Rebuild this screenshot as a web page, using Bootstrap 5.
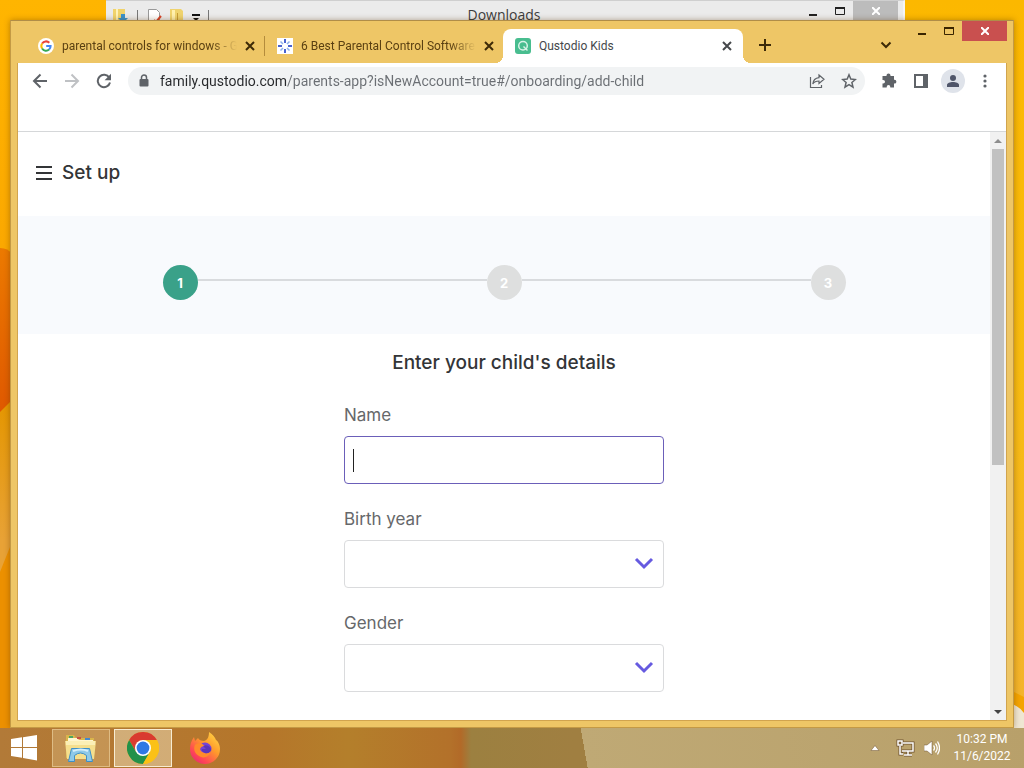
<!DOCTYPE html>
<html lang="en">
<head>
<meta charset="utf-8">
<meta name="viewport" content="width=device-width, initial-scale=1">
<title>Qustodio Kids</title>
<link href="https://cdn.jsdelivr.net/npm/bootstrap@5.3.0/dist/css/bootstrap.min.css" rel="stylesheet">
<style>
  :root { --ui: Roboto, "Open Sans", sans-serif; --caption: "Open Sans", sans-serif; --app: Inter, "Open Sans", sans-serif; }
  body { font-family: var(--ui); font-size: 12px; line-height: 16px; color: #3c3c3c; }
  button { font: inherit; color: inherit; }
  svg { display: block; flex: none; }
  .plain { border: 0; background: none; padding: 0; display: flex; align-items: center; justify-content: center; flex: none; }
  .wallpaper { position: absolute; inset: 0; width: 100%; height: 100%; }

  /* windows on the desktop */
  .downloads { position: absolute; left: 106px; right: 119px; top: 0; height: 40px; background: #ebebeb; border-top: 1px solid #cfcfcf; border-right: 2px solid #f5f5f5; }
  .downloads .strip { height: 19px; padding: 0 5px 0 7px; }
  .downloads .caption { font-family: var(--caption); font-size: 14px; line-height: 28px; }
  .downloads .vr-line { width: 1px; height: 12px; background: #777; }
  .downloads .shut { width: 45px; height: 19px; background: #bcbcbc; color: #fff; }
  .browser { position: absolute; left: 10px; right: 10px; top: 20px; bottom: 0; background: #eec666; border: 1px solid #c49a45; border-top-color: #b08d48; box-shadow: 0 0 6px rgba(90,50,0,.4); padding: 0 6px 6px; }
  .caption-btn { width: 27px; height: 20px; color: #3a2500; }
  .caption-close { width: 45px; background: #c9504f; color: #fff; }

  /* tab strip */
  .tabs { height: 42px; padding-left: 9px; }
  .tab { height: 34px; width: 238px; padding: 0 9px 0 12px; color: #5a4012; position: relative; }
  .tab-title { flex: 1 1 0; min-width: 0; overflow: hidden; white-space: nowrap; text-align: left; color: inherit; text-decoration: none; }
  .tab-title.fade-end { -webkit-mask-image: linear-gradient(90deg,#000 85%,transparent); mask-image: linear-gradient(90deg,#000 85%,transparent); }
  .tab-split { width: 1px; height: 20px; background: #b48c3c; }
  .tab.current { background: #fff; color: #45484b; border-radius: 8px 8px 0 0; width: 240px; padding-right: 11px; }
  .tab.current::before, .tab.current::after { content: ""; position: absolute; bottom: 0; width: 8px; height: 8px; }
  .tab.current::before { left: -8px; background: radial-gradient(circle at 0 0, transparent 8px, #fff 8px); }
  .tab.current::after { right: -8px; background: radial-gradient(circle at 100% 0, transparent 8px, #fff 8px); }

  /* toolbar */
  .viewport { background: #fff; border: 1px solid #d1a44e; border-top: 0; }
  .toolbar { height: 36px; padding: 0 13px 0 14px; color: #5f6368; }
  .address { height: 28px; border-radius: 14px; background: #f1f3f4; padding: 0 8px 0 11px; }
  .address .lock { margin-right: 11px; }
  .address input { border: 0; outline: 0; padding: 0; font-size: 14px; line-height: 20px; flex: 1 1 0; min-width: 0; color: transparent; background: linear-gradient(90deg,#26282b 127px,#6a6e73 127px); -webkit-background-clip: text; background-clip: text; }
  .avatar { width: 24px; height: 24px; border-radius: 50%; background: #dfe3ea; margin: 0 12px; }
  .bookmarks { height: 33px; border-bottom: 1px solid #d5d7d9; }

  /* page */
  .page { font-family: var(--app); }
  .page-head { height: 84px; padding: 0 18px 2px; gap: 10px; }
  .page-head h1 { font-size: 19px; line-height: 24px; font-weight: 500; margin: 0; color: #333537; }
  .steps-band { background: #f8fafd; padding: 49px 16px 34px; }
  .steps { max-width: 683px; }
  .step { width: 35px; height: 35px; border-radius: 50%; background: #dedfdf; color: #fff; font-size: 13px; font-weight: 700; }
  .step.active { background: #3aa189; }
  .step-line { height: 2px; background: #d9dbde; margin-bottom: 6px; }
  .child-form { max-width: 320px; }
  .child-form h2 { font-size: 19px; line-height: 24px; font-weight: 500; color: #333537; margin: 17px 0 28px; white-space: nowrap; }
  .child-form label { display: block; font-size: 17px; line-height: 24px; color: #66686a; margin-bottom: 9px; }
  .field { margin-bottom: 23px; position: relative; }
  .child-form .form-control, .child-form .form-select { height: 48px; border: 1px solid #dadbdd; border-radius: 4px; }
  .child-form .form-control { border-color: #6b5fb9; caret-color: transparent; padding: 0 8px; }
  .child-form .form-select { background-image: url("data:image/svg+xml,%3Csvg xmlns='http://www.w3.org/2000/svg' viewBox='0 0 20 20'%3E%3Cpath d='M2 5l8 8 8-8' fill='none' stroke='%23665ae0' stroke-width='3'/%3E%3C/svg%3E"); background-size: 20px 20px; background-position: right 9px center; }
  .caret::after { content: ""; position: absolute; left: 9px; bottom: 12px; width: 1px; height: 23px; background: #222; }
  .scroll { width: 16px; background: #f1f1f1; }
  .scroll .thumb { width: 12px; flex: 316 1 0; background: #c1c1c1; }
  .scroll .rest { flex: 238 1 0; }
  .scroll .plain { height: 17px; }

  /* taskbar */
  .taskbar { height: 40px; background: linear-gradient(90deg,#b27a38 0,#b5762a 26%,#b47f2b 34%,#b3712a 44%,#b26a28 45%,#9c8040 46%,#a07f41 56%,transparent 56%), linear-gradient(80deg,#a07f41 0 57%,#bfa975 57%,#b8a06a 100%); color: #fff; }
  .start { width: 52px; height: 38px; padding-right: 4px; }
  .task { width: 58px; height: 38px; margin-right: 4px; }
  .task.open { background: rgba(240,220,170,.28); border: 1px solid rgba(240,215,165,.6); }
  .task.front { background: rgba(240,225,190,.5); border: 1px solid #f7ecd2; }
  .clock { font-size: 12px; line-height: 17px; width: 64px; }
</style>
</head>
<body class="d-flex flex-column vh-100 overflow-hidden">

<main class="position-relative flex-grow-1 overflow-hidden">
  <svg class="wallpaper" viewBox="0 0 1024 728" preserveAspectRatio="none" aria-hidden="true">
    <defs>
      <linearGradient id="sun" x2="0" y2="1"><stop stop-color="#ffb500"/><stop offset=".34" stop-color="#fba800"/></linearGradient>
      <linearGradient id="ember" x2="0" y2="1"><stop stop-color="#ec7a00"/><stop offset="1" stop-color="#df5800"/></linearGradient>
      <linearGradient id="sand" x2="0" y2="1"><stop stop-color="#e49600"/><stop offset=".8" stop-color="#e8a236"/></linearGradient>
      <linearGradient id="east" x2="0" y2="1"><stop stop-color="#fcb800"/><stop offset=".5" stop-color="#f8bc10"/><stop offset="1" stop-color="#f3b32e"/></linearGradient>
    </defs>
    <path fill="url(#sun)" d="M0 0h512v728H0z"/>
    <path fill="url(#east)" d="M512 0h512v728H512z"/>
    <path fill="url(#ember)" d="M0 248q8 0 12 6v150L0 414z"/>
    <path fill="url(#sand)" d="M0 412l12-12v145L0 575z"/>
    <path fill="#ec9000" d="M0 572l12-30v186H0z"/>
    <path fill="#f4a400" d="M1000 685l24 12v31h-24z"/>
    <path fill="#efe6d2" d="M1000 700q18 4 24 13v15h-24z"/>
  </svg>

  <section class="downloads" aria-label="Downloads folder">
    <div class="strip d-flex align-items-start">
      <div class="d-flex align-items-center gap-2 pt-2">
        <svg width="16" height="14" viewBox="0 0 16 14"><path fill="#f0d36c" d="M0 0h12v14H0z"/><path fill="#fff3b8" d="M3 0h2v14H3z"/><path fill="#3b93cc" d="M8 5h4v4h3l-5 5-5-5h3z"/></svg>
        <span class="vr-line"></span>
        <svg width="16" height="14" viewBox="0 0 16 14"><path fill="#fff" stroke="#999" d="M2.500.5h8l3 3V14h-11z"/><path d="M8 11l2 2 5-6" fill="none" stroke="#d9452b" stroke-width="2"/></svg>
        <svg width="14" height="14" viewBox="0 0 14 14"><path fill="#efd36e" d="M0 0h11l2 2v12H0z"/><path fill="#fff0ad" d="M2 1h3v13H2z"/><path fill="#c69c34" d="M7 4h1v10H7z"/></svg>
        <svg width="8" height="10" viewBox="0 0 8 10"><path fill="#111" d="M0 3h8v2H0zM1 7h6L4 10z"/></svg>
        <span class="vr-line"></span>
      </div>
      <div class="caption flex-grow-1 text-center">Downloads</div>
      <button class="plain caption-btn" aria-label="Minimize"><svg width="8" height="12"><path fill="#222" d="M0 9h8v2H0z"/></svg></button>
      <button class="plain caption-btn" aria-label="Maximize"><svg width="10" height="8"><path fill="none" stroke="#222" d="M.5 1h9v6.500h-9z"/><path fill="#222" d="M0 0h10v2H0z"/></svg></button>
      <button class="plain shut" aria-label="Close"><svg width="8" height="8"><path stroke="#fff" stroke-width="2" d="M0 0l8 8M8 0L0 8"/></svg></button>
    </div>
  </section>

  <section class="browser d-flex flex-column" aria-label="Browser">
    <header class="d-flex align-items-start">
      <nav class="tabs d-flex align-items-end flex-grow-1" aria-label="Tabs">
        <div class="tab d-flex align-items-center">
          <svg width="16" height="16" viewBox="0 0 16 16"><circle cx="8" cy="8" r="8" fill="#fff"/><g fill="none" stroke-width="2"><path stroke="#ea4335" d="M4.100 5.500A4.600 4.600 0 0 1 11.300 4.800"/><path stroke="#fbbc05" d="M4.100 5.500a4.600 4.600 0 0 0 0 5"/><path stroke="#34a853" d="M4.100 10.500a4.600 4.600 0 0 0 7 1"/><path stroke="#4285f4" d="M11.100 11.500A4.600 4.600 0 0 0 12.600 8H8.200"/></g></svg>
          <a href="#" class="tab-title fade-end ms-2 me-2">parental controls for windows - G</a>
          <button class="plain" aria-label="Close tab"><svg width="10" height="10"><path stroke="#3d2a08" stroke-width="2" d="M1 1l8 8M9 1L1 9"/></svg></button>
        </div>
        <span class="tab-split align-self-center mt-2"></span>
        <div class="tab d-flex align-items-center">
          <svg width="16" height="16" viewBox="0 0 16 16"><path fill="#fff" d="M0 0h16v16H0z"/><g stroke="#4a63d0" stroke-width="2"><path d="M8 1v4M8 11v4M1 8h4M11 8h4"/><path stroke="#8fb2ea" stroke-width="1.500" d="M3.500 3.500L6 6M12.500 3.500L10 6M3.500 12.500L6 10M12.500 12.500L10 10"/></g></svg>
          <a href="#" class="tab-title fade-end ms-2 me-2">6 Best Parental Control Software</a>
          <button class="plain" aria-label="Close tab"><svg width="10" height="10"><path stroke="#3d2a08" stroke-width="2" d="M1 1l8 8M9 1L1 9"/></svg></button>
        </div>
        <div class="tab current d-flex align-items-center">
          <svg width="16" height="16" viewBox="0 0 16 16"><rect width="16" height="16" rx="3" fill="#48bd8f"/><circle cx="8" cy="7.700" r="4.300" fill="none" stroke="#d8f3e7" stroke-width="1.500"/><path stroke="#d8f3e7" stroke-width="1.500" d="M8.500 8.500l4 4"/></svg>
          <a href="#" class="tab-title ms-2">Qustodio Kids</a>
          <button class="plain" aria-label="Close tab"><svg width="10" height="10"><path stroke="#45484b" stroke-width="2" d="M1 1l8 8M9 1L1 9"/></svg></button>
        </div>
        <button class="plain ms-3 mb-2 pb-1" aria-label="New tab"><svg width="12" height="12"><path stroke="#3d2a08" stroke-width="2" d="M6 0v12M0 6h12"/></svg></button>
        <button class="plain ms-auto me-3 mb-2 pb-1" aria-label="Search tabs"><svg width="12" height="12"><path fill="none" stroke="#3d2a08" stroke-width="2" d="M1.500 3.500L6 8l4.500-4.500"/></svg></button>
      </nav>
      <button class="plain caption-btn" aria-label="Minimize"><svg width="8" height="12"><path fill="currentColor" d="M0 8h8v2H0z"/></svg></button>
      <button class="plain caption-btn" aria-label="Maximize"><svg width="10" height="8"><path fill="none" stroke="currentColor" d="M.5 1h9v6.500h-9z"/><path fill="currentColor" d="M0 0h10v2H0z"/></svg></button>
      <button class="plain caption-btn caption-close" aria-label="Close"><svg width="8" height="8"><path stroke="#fff" stroke-width="2" d="M0 0l8 8M8 0L0 8"/></svg></button>
    </header>

    <div class="viewport d-flex flex-column flex-grow-1 overflow-hidden">
      <div class="toolbar d-flex align-items-center flex-shrink-0">
        <button class="plain" aria-label="Back"><svg width="16" height="16" viewBox="0 0 16 16"><path fill="none" stroke="currentColor" stroke-width="2" d="M15 8H2M8.500 1.500L2 8l6.500 6.500"/></svg></button>
        <button class="plain ms-3" aria-label="Forward"><svg width="16" height="16" viewBox="0 0 16 16"><path fill="none" stroke="#bfc1c4" stroke-width="2" d="M1 8h13M7.500 1.500L14 8l-6.500 6.500"/></svg></button>
        <button class="plain ms-3 me-3" aria-label="Reload"><svg width="16" height="16" viewBox="0 0 16 16"><path fill="none" stroke="currentColor" stroke-width="2" d="M13.300 4.800A6.200 6.200 0 1 0 14 9.500"/><path fill="currentColor" d="M15 .8v6.400H8.600z"/></svg></button>
        <div class="address d-flex align-items-center flex-grow-1">
          <svg class="lock" width="10" height="14" viewBox="0 0 10 14"><rect x=".5" y="5" width="9" height="7.500" rx="1" fill="currentColor"/><path fill="none" stroke="currentColor" stroke-width="1.500" d="M2.500 5.500V3.500a2.500 2.500 0 0 1 5 0v2"/></svg>
          <input type="text" aria-label="Address" value="family.qustodio.com/parents-app?isNewAccount=true#/onboarding/add-child">
          <button class="plain" aria-label="Share"><svg width="16" height="16" viewBox="0 0 16 16"><path fill="none" stroke="currentColor" stroke-width="1.200" d="M1.500 4v10.500h11V12M10 2l5 4.300-5 4.200V8C7 8 5 9 3.800 11 4.200 7 6.500 5 10 4.600z"/></svg></button>
          <button class="plain ms-3" aria-label="Bookmark"><svg width="16" height="16" viewBox="0 0 16 16"><path fill="none" stroke="currentColor" stroke-width="1.500" d="M8 1.800l1.800 4.300 4.600.4-3.500 3 1.100 4.600L8 11.700l-4 2.400 1.100-4.600-3.500-3 4.600-.4z"/></svg></button>
        </div>
        <button class="plain ms-3" aria-label="Extensions"><svg width="16" height="16" viewBox="0 0 16 16"><path fill="currentColor" d="M2 3h3.500V2.500a2 2 0 0 1 4 0V3H13v3.800h.5a1.900 1.900 0 0 1 0 3.800H13v4H9.300v-.7a1.800 1.800 0 0 0-3.600 0v.7H1.500v-4h.7a1.800 1.800 0 0 0 0-3.600h-.7V3z"/></svg></button>
        <button class="plain ms-3" aria-label="Side panel"><svg width="16" height="16" viewBox="0 0 16 16"><path fill="currentColor" fill-rule="evenodd" d="M1 1h14v14H1zM3 3v10h7V3z"/></svg></button>
        <button class="plain avatar" aria-label="Profile"><svg width="14" height="14" viewBox="0 0 14 14"><circle cx="7" cy="4" r="3" fill="#50566a"/><path fill="#50566a" d="M1 13v-2c0-4 12-4 12 0v2z"/></svg></button>
        <button class="plain" aria-label="Menu"><svg width="16" height="16" viewBox="0 0 16 16" fill="currentColor"><circle cx="8" cy="3" r="1.600"/><circle cx="8" cy="8" r="1.600"/><circle cx="8" cy="13" r="1.600"/></svg></button>
      </div>
      <div class="bookmarks flex-shrink-0"></div>

      <div class="d-flex flex-grow-1 overflow-hidden">
        <div class="page flex-grow-1 overflow-hidden">
          <header class="page-head d-flex align-items-center">
            <button class="plain" aria-label="Open menu"><svg width="16" height="16"><path stroke="#333537" stroke-width="2" d="M0 2h16M0 8h16M0 14h16"/></svg></button>
            <h1>Set up</h1>
          </header>
          <div class="steps-band">
            <div class="steps d-flex align-items-center mx-auto">
              <span class="step active d-flex align-items-center justify-content-center">1</span>
              <span class="step-line flex-grow-1"></span>
              <span class="step d-flex align-items-center justify-content-center">2</span>
              <span class="step-line flex-grow-1"></span>
              <span class="step d-flex align-items-center justify-content-center">3</span>
            </div>
          </div>
          <form class="child-form mx-auto">
            <h2 class="text-center">Enter your child's details</h2>
            <div class="field caret">
              <label for="name">Name</label>
              <input id="name" class="form-control" type="text">
            </div>
            <div class="field">
              <label for="year">Birth year</label>
              <select id="year" class="form-select"><option></option></select>
            </div>
            <div class="field">
              <label for="gender">Gender</label>
              <select id="gender" class="form-select"><option></option></select>
            </div>
          </form>
        </div>
        <div class="scroll d-flex flex-column align-items-center flex-shrink-0">
          <button class="plain" aria-label="Scroll up"><svg width="8" height="4"><path fill="#8d8d8d" d="M0 4l4-4 4 4z"/></svg></button>
          <div class="thumb"></div>
          <div class="rest"></div>
          <button class="plain" aria-label="Scroll down"><svg width="8" height="4"><path fill="#444" d="M0 0l4 4 4-4z"/></svg></button>
        </div>
      </div>
    </div>
  </section>
</main>

<footer class="taskbar d-flex align-items-center flex-shrink-0">
  <button class="plain start" aria-label="Start"><svg width="28" height="28" viewBox="0 0 28 28" fill="#fff"><path d="M1 5l11-1.700V13H1zM13 3.200L27 1v12H13zM1 14h11v9.700L1 22zM13 14h14v12.500l-14-2.400z"/></svg></button>
  <button class="plain task open" aria-label="File Explorer"><svg width="34" height="32" viewBox="0 0 34 32"><path fill="#d9b54c" d="M2 3h8l2 3h18v20H2z"/><path fill="#fff6cf" d="M4 6h9l2 2h14v4H4z"/><path fill="#4aa564" d="M5 4h4v2H5z"/><path fill="#c94f42" d="M13 5h4v2h-4z"/><path fill="#4488cc" d="M21 6h5v2h-5z"/><path fill="#f5df8e" d="M1 9h31l-2 18H3z"/><path fill="#fbefb6" d="M2 9h29v4H2z"/><path fill="#8fc9e8" stroke="#3e8fc6" d="M7.500 16.500h18l3 13h-6v-6q-6-5-12 0v6h-6z"/><path stroke="#d5effb" fill="none" stroke-width="2" d="M9 19q8-3 15 0"/></svg></button>
  <button class="plain task front" aria-label="Chrome"><svg width="32" height="32" viewBox="0 0 32 32"><circle cx="16" cy="16" r="16" fill="#fbc116"/><path fill="#d93b30" d="M2.140 8A16 16 0 0 1 29.860 8H16L9.100 20z"/><path fill="#22914a" d="M2.140 8A16 16 0 0 0 16 32l6.900-12H9.100z"/><path fill="#fbc116" d="M29.860 8A16 16 0 0 1 16 32l6.900-12L22 10 16 8z"/><circle cx="16" cy="16" r="8" fill="#fff"/><circle cx="16" cy="16" r="6.400" fill="#2f78e4"/></svg></button>
  <button class="plain task" aria-label="Firefox"><svg width="32" height="32" viewBox="0 0 32 32"><defs><linearGradient id="fox" x1="1" x2=".2" y2="1"><stop stop-color="#ffe14a"/><stop offset=".45" stop-color="#ff9a2b"/><stop offset=".8" stop-color="#ff4755"/><stop offset="1" stop-color="#e82b70"/></linearGradient></defs><path fill="url(#fox)" d="M20 0c4 3 6 5 7 8 2 1 4 5 4 9a15 15 0 0 1-30 0c0-4 1-8 4-12l1 4 3-3c1 2 3 3 6 3 4-1 5-5 5-9z"/><circle cx="16" cy="17" r="6.500" fill="#7542d6"/><path fill="#ff8b2a" d="M6 13c3-3 7-2 10 1-3 0-4 1-5 3 1 4 7 6 11 2-1 6-8 8-12 5-4-2-6-7-4-11z"/><path fill="#5a36b9" d="M14 14c3-2 7 0 8 3 0 3-3 5-6 4-3-1-4-3-3-4h4z"/></svg></button>
  <div class="d-flex align-items-center ms-auto me-2 pe-1">
    <button class="plain" aria-label="Show hidden icons"><svg width="10" height="6"><path fill="#fff" stroke="#6e5230" stroke-width=".5" d="M1 5.500l4-5 4 5z"/></svg></button>
    <svg class="mx-2 ms-3" width="20" height="18" viewBox="0 0 20 18"><g fill="none" stroke="#6e5230" stroke-width="3"><path d="M7 4h10v8H6M12 12v4M8 16h8M4 7v8h3M2 2h4v4H2z"/></g><g fill="none" stroke="#fff" stroke-width="1.500"><path d="M7 4h10v8H6M12 12v4M8 16h8M4 7v8h3M2 2h4v4H2z"/></g></svg>
    <svg width="16" height="16" viewBox="0 0 16 16"><path fill="#fff" stroke="#6e5230" stroke-width=".5" d="M0 5h3l5-4v14l-5-4H0z"/><path fill="none" stroke="#fff" stroke-width="1.300" d="M9.500 5.500q2 2.500 0 5M11.500 3.500q3.500 4.500 0 9M13.500 1.500q4 6.500 0 13"/></svg>
    <div class="clock text-center ms-2 ps-1"><div>10:32 PM</div><div>11/6/2022</div></div>
  </div>
</footer>

<script src="https://cdn.jsdelivr.net/npm/bootstrap@5.3.0/dist/js/bootstrap.bundle.min.js"></script>
</body>
</html>
